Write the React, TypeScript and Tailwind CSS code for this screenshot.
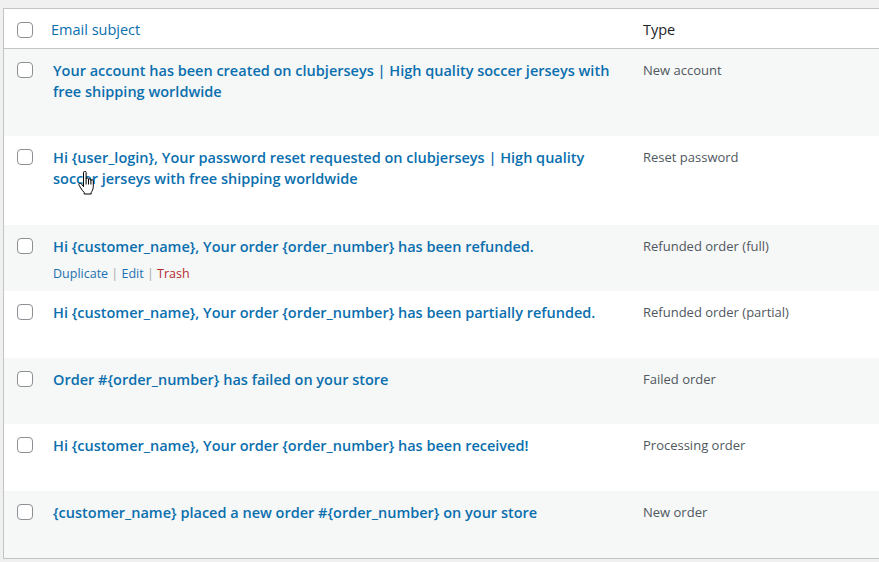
import React from "react";

type Row = { title: React.ReactNode; type: string; h: string; actions?: boolean; striped: boolean };

const rows: Row[] = [
  {
    title: (
      <>
        Your account has been created on clubjerseys | High quality soccer jerseys with
        <br />
        free shipping worldwide
      </>
    ),
    type: "New account",
    h: "h-[87px]",
    striped: true,
  },
  {
    title: (
      <>
        Hi {"{user_login}"}, Your password reset requested on clubjerseys | High quality
        <br />
        soccer jerseys with free shipping worldwide
      </>
    ),
    type: "Reset password",
    h: "h-[89px]",
    striped: false,
  },
  {
    title: <>Hi {"{customer_name}"}, Your order {"{order_number}"} has been refunded.</>,
    type: "Refunded order (full)",
    h: "h-[66px]",
    striped: true,
    actions: true,
  },
  {
    title: <>Hi {"{customer_name}"}, Your order {"{order_number}"} has been partially refunded.</>,
    type: "Refunded order (partial)",
    h: "h-[67px]",
    striped: false,
  },
  {
    title: <>Order #{"{order_number}"} has failed on your store</>,
    type: "Failed order",
    h: "h-[66px]",
    striped: true,
  },
  {
    title: <>Hi {"{customer_name}"}, Your order {"{order_number}"} has been received!</>,
    type: "Processing order",
    h: "h-[67px]",
    striped: false,
  },
  {
    title: <>{"{customer_name}"} placed a new order #{"{order_number}"} on your store</>,
    type: "New order",
    h: "h-[67px]",
    striped: true,
  },
];

function Checkbox() {
  return <div className="w-4 h-4 rounded-[4px] border border-[#8c8f94] bg-white shrink-0" />;
}

function HandCursor() {
  return (
    <svg
      className="absolute left-[78px] top-[171px]"
      width="18"
      height="24"
      viewBox="0 0 18 24"
    >
      <path
        d="M5.5 1.5 C5.5 0.7 6.1 0.2 6.8 0.2 C7.5 0.2 8.1 0.7 8.1 1.5 V8.2 C8.1 7.5 8.6 7 9.3 7 C10 7 10.5 7.5 10.5 8.2 V9 C10.5 8.3 11 7.8 11.7 7.8 C12.4 7.8 12.9 8.3 12.9 9 V9.8 C12.9 9.1 13.4 8.6 14.1 8.6 C14.8 8.6 15.3 9.1 15.3 9.8 V15.5 C15.3 18.5 13.8 20.5 13.2 21.5 V23 H6.2 V21.5 C5 20.3 3.6 18.4 2.6 16.8 L1.1 14.3 C0.7 13.6 0.9 12.8 1.5 12.4 C2.1 12 2.9 12.2 3.3 12.8 L5.5 15.6 Z"
        fill="white"
        stroke="black"
        strokeWidth="1"
        strokeLinejoin="round"
      />
      <path d="M8.1 8.2 V13.5 M10.5 9 V13.5 M12.9 9.8 V13.5" stroke="black" strokeWidth="1" fill="none" />
    </svg>
  );
}

export default function App() {
  return (
    <div
      className="relative w-[879px] h-[562px] overflow-hidden bg-[#f0f0f1] pt-2 pl-[3px]"
      style={{ fontFamily: '"Segoe UI", "Open Sans", "Noto Sans", sans-serif' }}
    >
      <div className="w-[900px] border border-[#c3c4c7] bg-white">
        {/* header */}
        <div className="flex items-center h-[40px] pt-[2px] border-b border-[#c3c4c7]">
          <div className="w-[47px] pl-[13px] flex items-center">
            <Checkbox />
          </div>
          <div className="w-[592px] text-[14.5px] text-[#0a6fae]">Email subject</div>
          <div className="text-[14.5px] text-[#1d2327]">Type</div>
        </div>
        {rows.map((r, i) => (
          <div key={i} className={`flex ${r.h} ${r.striped ? "bg-[#f6f7f7]" : "bg-white"}`}>
            <div className="w-[48px] pl-[13px] pt-[13px]">
              <Checkbox />
            </div>
            <div className="w-[591px] pl-[1px] pt-[11px]">
              <div className="text-[14.5px] leading-[21px] font-semibold text-[#0a6fae]">{r.title}</div>
              {r.actions && (
                <div className="mt-[7px] text-[12.5px] leading-[19px] text-[#a7aaad]">
                  <span className="text-[#2271b1]">Duplicate</span> |{" "}
                  <span className="text-[#2271b1]">Edit</span> |{" "}
                  <span className="text-[#b32d2e]">Trash</span>
                </div>
              )}
            </div>
            <div className="pt-[12px] text-[13px] leading-[19px] text-[#50575e]">{r.type}</div>
          </div>
        ))}
      </div>
      <HandCursor />
    </div>
  );
}
